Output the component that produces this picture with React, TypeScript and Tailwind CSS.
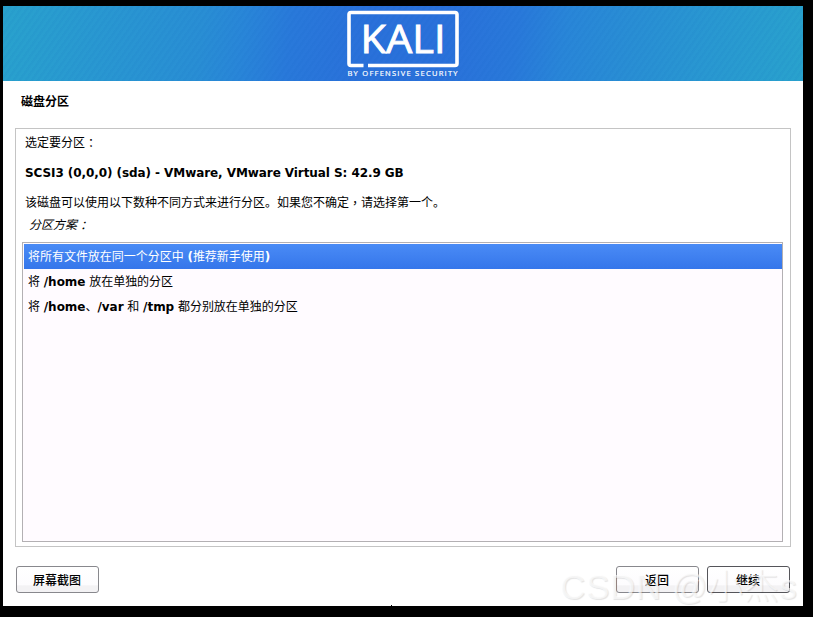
import type { ReactNode } from 'react';

function Mid({ children }: { children: string }) {
  return <span className="relative top-px font-['Noto_Sans_CJK_TC',sans-serif]">{children}</span>;
}

function Logo() {
  return (
    <svg width="114" height="70" viewBox="0 0 114 70" className="mt-[3px] fill-white">
      <path
        d="M17.500 56.500H5Q3 56.500 3 54.500V5.500Q3 3.500 5 3.500H109Q111 3.500 111 5.500V54.500Q111 56.500 109 56.500H22"
        fill="none"
        stroke="white"
        strokeWidth="3.600"
      />
      <text x="14.500" y="44" fontSize="38.500" textLength="85" lengthAdjust="spacingAndGlyphs" stroke="white" strokeWidth="0.900" className="font-['Open_Sans',sans-serif]">
        KALI
      </text>
      <text x="1.500" y="66.500" fontSize="7.500" textLength="110" stroke="white" strokeWidth="0.200" className="font-['Open_Sans',sans-serif]">
        BY OFFENSIVE SECURITY
      </text>
    </svg>
  );
}

function Button({ children, dark = false }: { children: string; dark?: boolean }) {
  return (
    <button
      className={`flex h-[27px] w-[83px] items-center justify-center rounded-[3px] border bg-[linear-gradient(#ffffff_0%,#fdfcfe_70%,#f3f2f4_76%,#f3f2f4_100%)] pt-0.5 pr-px font-medium ${dark ? 'border-[#55555a]' : 'border-[#88888d]'}`}
    >
      {children}
    </button>
  );
}

function Row({ children, selected = false }: { children: ReactNode; selected?: boolean }) {
  return (
    <li
      className={`h-[25px] pt-px pl-1 leading-[25px] tracking-[-0.03px] whitespace-pre ${selected ? 'bg-linear-to-b from-[#4a8bf6] to-[#3576ea] text-white' : ''}`}
    >
      {children}
    </li>
  );
}

export default function App() {
  return (
    <div className="relative h-[617px] w-[813px] overflow-hidden bg-black pt-1.5 pl-[3px] font-['DejaVu_Sans','Noto_Sans_CJK_SC',sans-serif] text-[12px] text-black">
      <main className="flex h-[600px] w-[800px] flex-col bg-white">
        <header className="flex h-[75px] shrink-0 justify-center bg-[repeating-linear-gradient(125deg,#0050b00c_0px,#0050b00c_2px,transparent_3px,transparent_5px),linear-gradient(98deg,#29a2cd_0%,#2998d1_12%,#298ed4_25%,#2986d8_30%,#2979da_36%,#2a71da_45%,#2a71da_55%,#2979da_64%,#2986d8_70%,#298ed4_78%,#2998d1_88%,#29a2cd_100%)]">
          <Logo />
        </header>
        <h1 className="mt-[11px] ml-[18px] h-5 leading-5 font-bold">磁盘分区</h1>
        <section className="mt-4 ml-3 flex h-[419px] w-[776px] shrink-0 flex-col border border-[#c4c4c4] px-1.5 pt-[3px]">
          <p className="ml-[3px] h-5 leading-5">选定要分区<Mid>：</Mid></p>
          <p className="mt-[11px] ml-[3px] h-5 leading-5 font-bold tracking-[-0.075px]">SCSI3 (0,0,0) (sda) - VMware, VMware Virtual S: 42.9 GB</p>
          <p className="mt-[9px] ml-[3px] h-5 leading-5">
            该磁盘可以使用以下数种不同方式来进行分区。如果您不确定<Mid>，</Mid>请选择第一个。
          </p>
          <p className="mt-0.5 ml-[7px] h-5 leading-5 italic">分区方案<Mid>：</Mid></p>
          <ul className="mt-2 h-[300px] w-[761px] border border-[#b3b0b3] bg-[#fffbff] pt-px pl-px">
            <Row selected>将所有文件放在同一个分区中 <b>(</b>推荐新手使用<b>)</b></Row>
            <Row>将 <b>/home</b> 放在单独的分区</Row>
            <Row>将 <b>/home</b>、<b>/var</b> 和 <b>/tmp</b> 都分别放在单独的分区</Row>
          </ul>
        </section>
        <footer className="mt-[19px] ml-[13px] flex w-[774px]">
          <Button>屏幕截图</Button>
          <div className="ml-auto flex gap-2">
            <Button>返回</Button>
            <Button dark>继续</Button>
          </div>
        </footer>
        <div className="mt-auto ml-[388px] h-px w-px bg-black" />
      </main>
      <div className="pointer-events-none absolute top-[562px] left-[560px] font-['Liberation_Sans','Noto_Sans_CJK_SC',sans-serif] text-[35px] leading-[50px] font-light tracking-[0.6px] whitespace-pre text-[#ffffffa0] [text-shadow:1px_1px_1px_#0000001c]">
        CSDN @小杰s
      </div>
    </div>
  );
}
